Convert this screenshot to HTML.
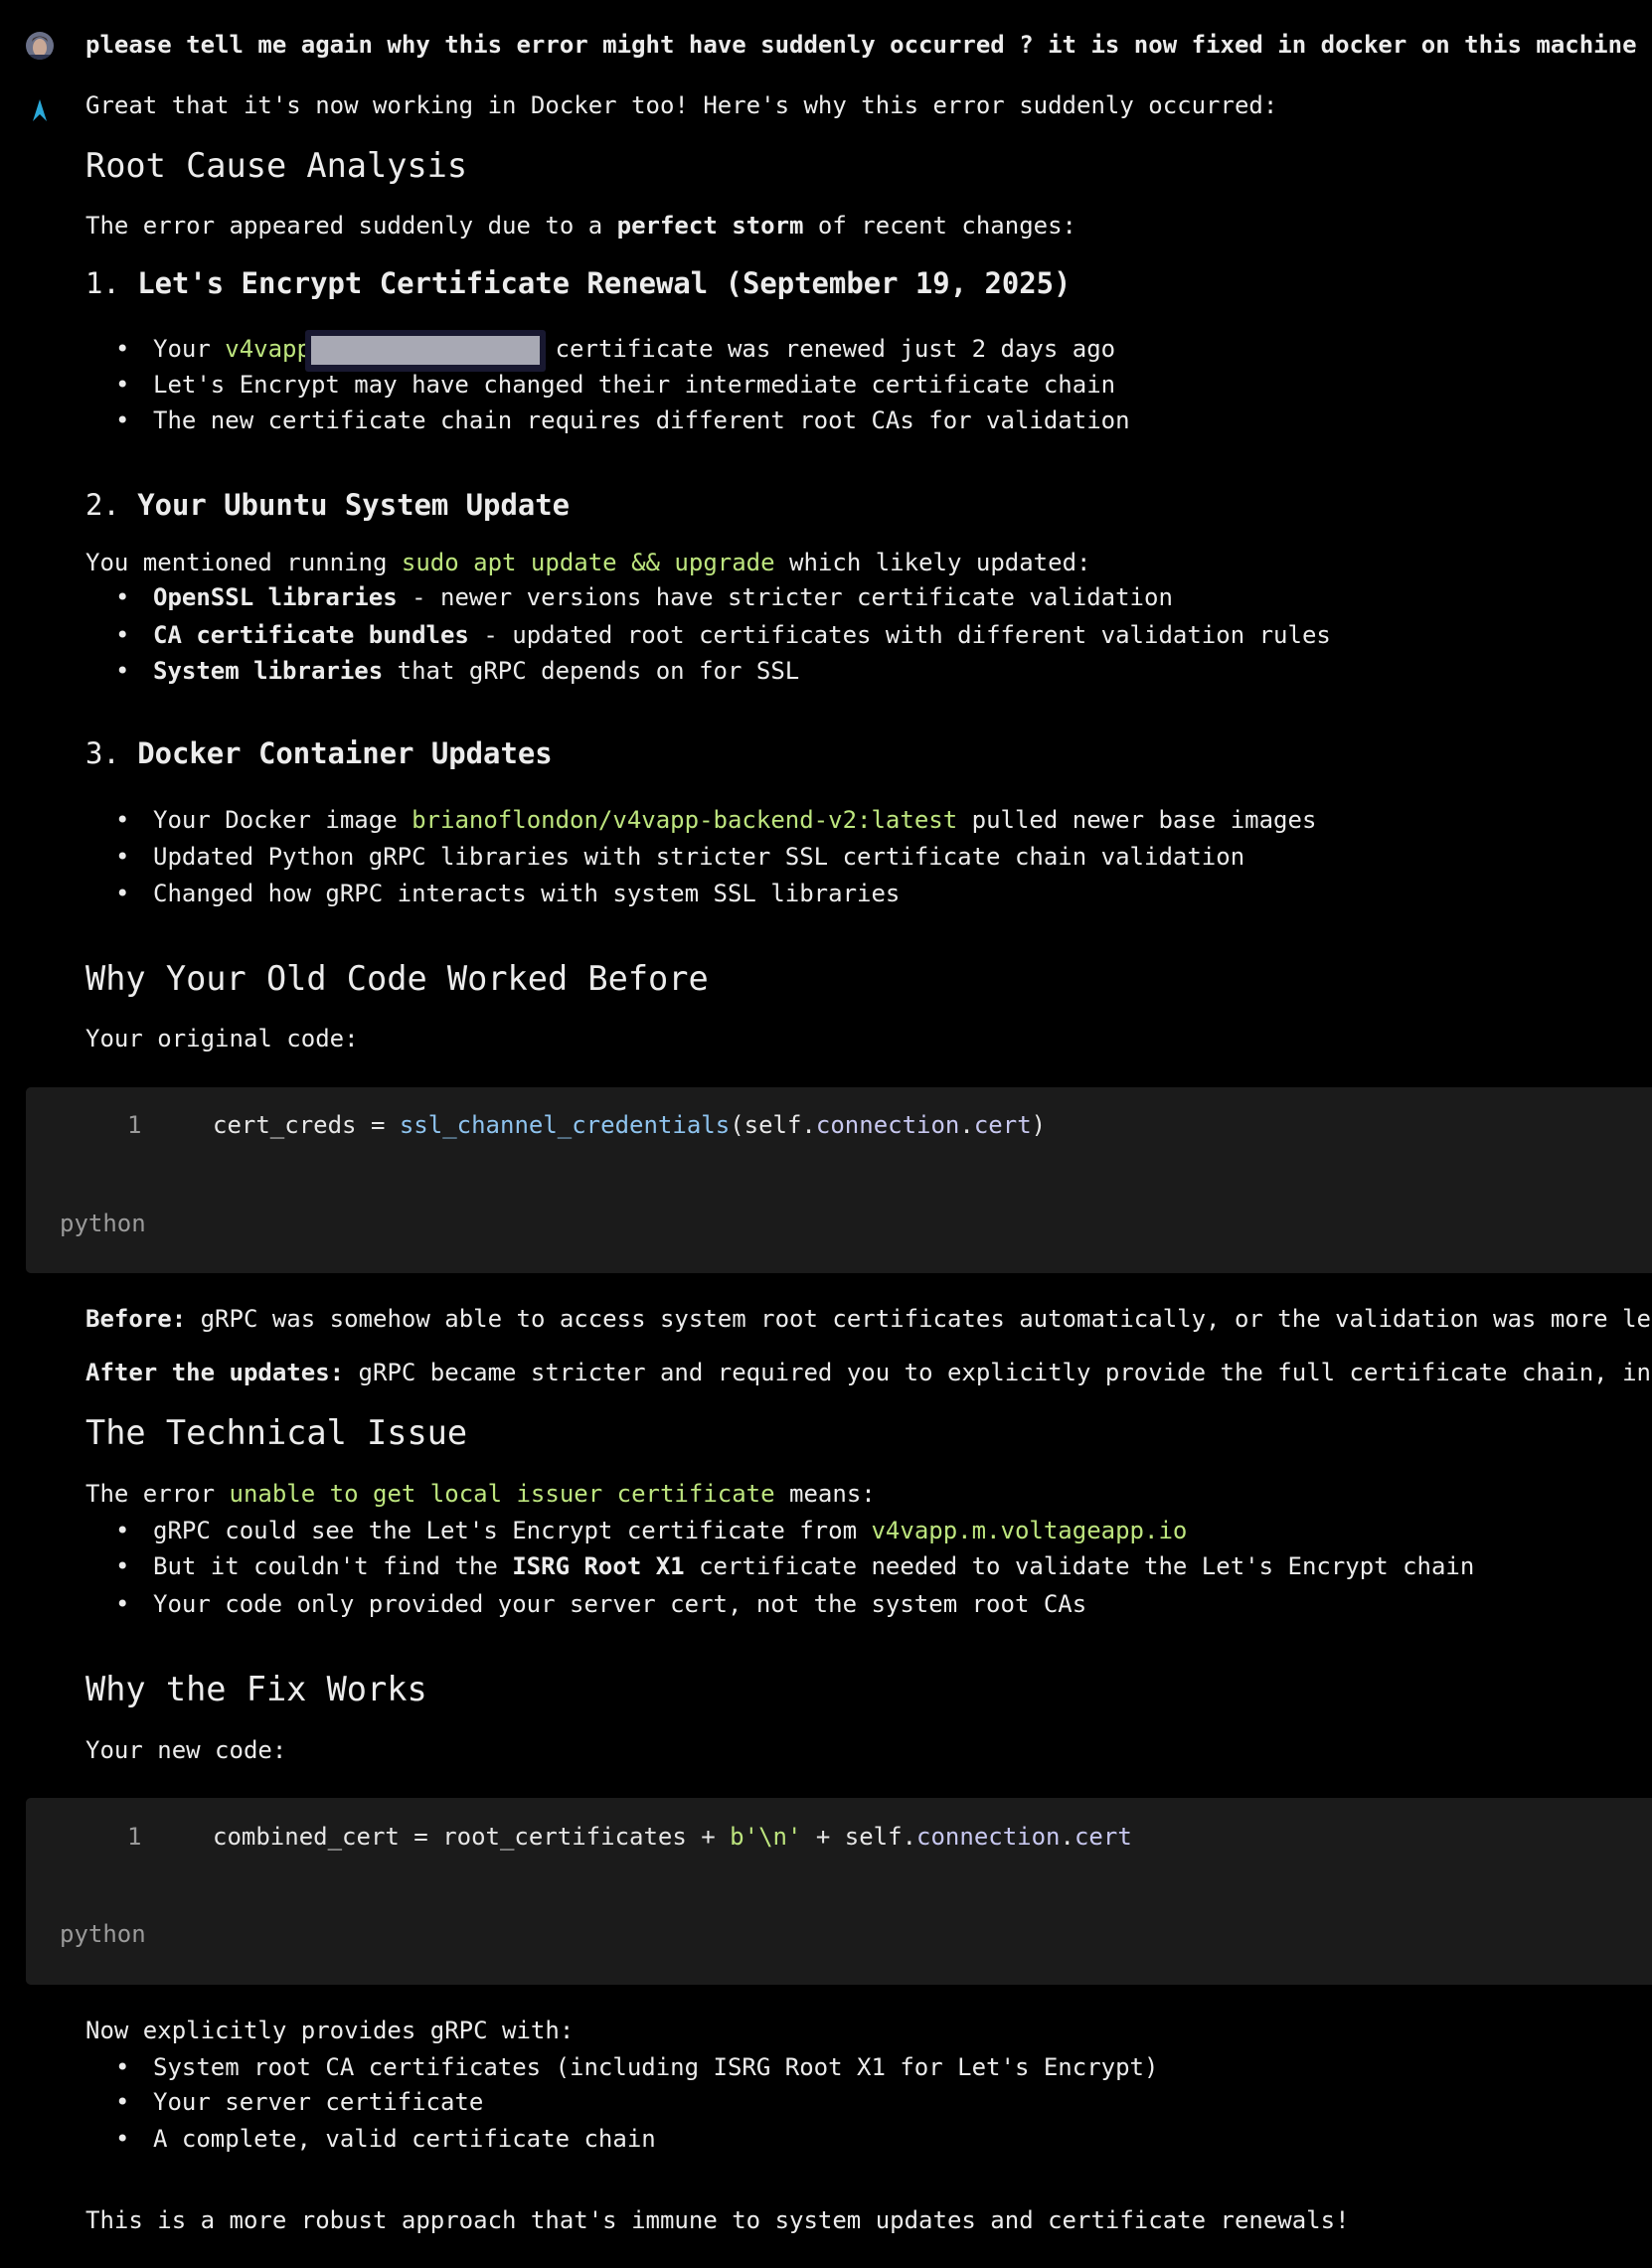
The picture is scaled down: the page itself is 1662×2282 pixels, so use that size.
<!DOCTYPE html>
<html><head><meta charset="utf-8"><style>
html,body{margin:0;padding:0;background:#000;width:1662px;height:2282px;overflow:hidden}
body{position:relative;font-family:"DejaVu Sans Mono","Liberation Mono",monospace;color:#ececec;font-size:24px}
.l{position:absolute;left:86px;height:36px;line-height:36px;white-space:pre}
.b{font-weight:bold}
.g{color:#bde57e}
.h1{font-size:33.6px;height:50px;line-height:50px}
.h2{font-size:28.9px;height:44px;line-height:44px}
.li{left:154px}
.li:before{content:"•";position:absolute;left:-38px;width:14px;text-align:center}
.code{position:absolute;left:26px;width:1636px;background:#1b1b1b;border-radius:5px 0 0 5px;overflow:hidden}
.num{position:absolute;left:102px;color:#9a9a9a;line-height:36px}
.cl{position:absolute;left:188px;line-height:36px;white-space:pre;color:#e6e6e6}
.py{position:absolute;left:34px;color:#9a9a9a;line-height:36px}
.f{color:#8ec3ee}.p{color:#c8c8f0}
</style></head><body>
<svg style="position:absolute;left:26px;top:32px" width="28" height="28"><defs><clipPath id="c"><circle cx="14" cy="14" r="14"/></clipPath></defs><g clip-path="url(#c)"><rect width="28" height="28" fill="#6a7088"/><ellipse cx="14" cy="16" rx="7" ry="9" fill="#c9a896"/><path d="M6 10 Q14 0 22 10 L21 7 Q14 2 7 7Z" fill="#3a2e2a"/><rect x="0" y="23" width="28" height="6" fill="#2e3550"/></g></svg>
<svg style="position:absolute;left:33px;top:100px" width="14" height="22"><path d="M7 0 L14 22 L7 15 L0 22Z" fill="#2aa8d8"/></svg>
<div class="l b" style="top:27px">please tell me again why this error might have suddenly occurred ? it is now fixed in docker on this machine</div>
<div class="l" style="top:88px">Great that it's now working in Docker too! Here's why this error suddenly occurred:</div>
<div class="l h1" style="top:142px">Root Cause Analysis</div>
<div class="l" style="top:209px">The error appeared suddenly due to a <span class="b">perfect storm</span> of recent changes:</div>
<div class="l h2" style="top:263px">1. <span class="b">Let's Encrypt Certificate Renewal (September 19, 2025)</span></div>
<div class="l li" style="top:333px">Your <span class="g">v4vapp</span>                 certificate was renewed just 2 days ago</div>
<div style="position:absolute;left:307px;top:332px;width:242px;height:42px;background:#181830;border-radius:3px"></div>
<div style="position:absolute;left:313px;top:338px;width:230px;height:29px;background:#a8a9b4"></div>
<div class="l li" style="top:369px">Let's Encrypt may have changed their intermediate certificate chain</div>
<div class="l li" style="top:405px">The new certificate chain requires different root CAs for validation</div>
<div class="l h2" style="top:486px">2. <span class="b">Your Ubuntu System Update</span></div>
<div class="l" style="top:548px">You mentioned running <span class="g">sudo apt update &amp;&amp; upgrade</span> which likely updated:</div>
<div class="l li" style="top:583px"><span class="b">OpenSSL libraries</span> - newer versions have stricter certificate validation</div>
<div class="l li" style="top:621px"><span class="b">CA certificate bundles</span> - updated root certificates with different validation rules</div>
<div class="l li" style="top:657px"><span class="b">System libraries</span> that gRPC depends on for SSL</div>
<div class="l h2" style="top:736px">3. <span class="b">Docker Container Updates</span></div>
<div class="l li" style="top:807px">Your Docker image <span class="g">brianoflondon/v4vapp-backend-v2:latest</span> pulled newer base images</div>
<div class="l li" style="top:844px">Updated Python gRPC libraries with stricter SSL certificate chain validation</div>
<div class="l li" style="top:881px">Changed how gRPC interacts with system SSL libraries</div>
<div class="l h1" style="top:960px">Why Your Old Code Worked Before</div>
<div class="l" style="top:1027px">Your original code:</div>
<div class="code" style="top:1094px;height:187px">
<div class="num" style="top:20px">1</div>
<div class="cl" style="top:20px">cert_creds = <span class="f">ssl_channel_credentials</span>(self.<span class="p">connection</span>.<span class="p">cert</span>)</div>
<div class="py" style="top:119px">python</div>
</div>
<div class="l" style="top:1309px"><span class="b">Before:</span> gRPC was somehow able to access system root certificates automatically, or the validation was more lenient</div>
<div class="l" style="top:1363px"><span class="b">After the updates:</span> gRPC became stricter and required you to explicitly provide the full certificate chain, including root CAs</div>
<div class="l h1" style="top:1417px">The Technical Issue</div>
<div class="l" style="top:1485px">The error <span class="g">unable to get local issuer certificate</span> means:</div>
<div class="l li" style="top:1522px">gRPC could see the Let's Encrypt certificate from <span class="g">v4vapp.m.voltageapp.io</span></div>
<div class="l li" style="top:1558px">But it couldn't find the <span class="b">ISRG Root X1</span> certificate needed to validate the Let's Encrypt chain</div>
<div class="l li" style="top:1596px">Your code only provided your server cert, not the system root CAs</div>
<div class="l h1" style="top:1675px">Why the Fix Works</div>
<div class="l" style="top:1743px">Your new code:</div>
<div class="code" style="top:1809px;height:188px">
<div class="num" style="top:21px">1</div>
<div class="cl" style="top:21px">combined_cert = root_certificates + <span class="g">b'\n'</span> + self.<span class="p">connection</span>.<span class="p">cert</span></div>
<div class="py" style="top:119px">python</div>
</div>
<div class="l" style="top:2025px">Now explicitly provides gRPC with:</div>
<div class="l li" style="top:2062px">System root CA certificates (including ISRG Root X1 for Let's Encrypt)</div>
<div class="l li" style="top:2097px">Your server certificate</div>
<div class="l li" style="top:2134px">A complete, valid certificate chain</div>
<div class="l" style="top:2216px">This is a more robust approach that's immune to system updates and certificate renewals!</div>
</body></html>
